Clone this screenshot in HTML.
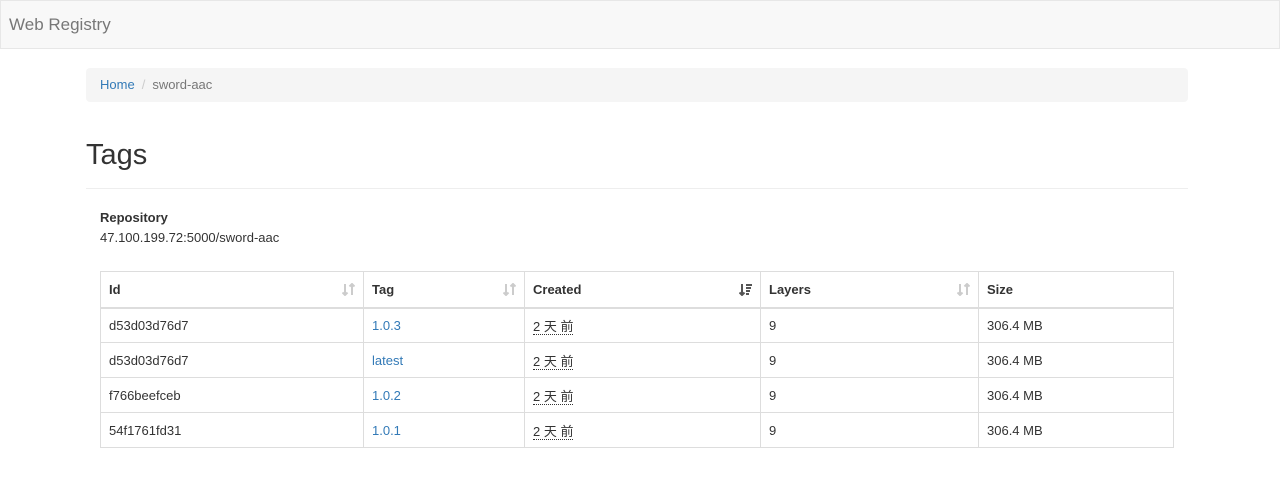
<!DOCTYPE html>
<html><head><meta charset="utf-8"><style>
*{box-sizing:border-box;margin:0;padding:0}
body{width:1280px;height:487px;background:#fff;font-family:"Liberation Sans","Noto Sans CJK SC",sans-serif;font-size:13px;color:#333;position:relative;overflow:hidden}
.nav{position:absolute;left:0;top:0;width:1280px;height:49px;background:#f8f8f8;border:1px solid #e7e7e7}
.brand{position:absolute;left:8px;top:14px;font-size:17px;color:#777}
.bc{position:absolute;left:86px;top:68px;width:1102px;height:34px;background:#f5f5f5;border-radius:4px;padding:8px 14px;line-height:18px}
.bc a{color:#337ab7;text-decoration:none}
.bc .s{color:#ccc;padding:0 7px}
.bc .c{color:#777}
h1{position:absolute;left:86px;top:138px;font-size:29px;font-weight:500;line-height:34px}
.hr{position:absolute;left:86px;top:188px;width:1102px;border-top:1px solid #eee}
.rep{position:absolute;left:100px;top:208px;line-height:20px}
table{position:absolute;left:100px;top:271px;width:1074px;border-collapse:collapse}
td,th{border:1px solid #ddd;padding:0 8px;text-align:left;height:35px;position:relative}
th{border-bottom:2px solid #ddd;height:36px}
td a{color:#337ab7;text-decoration:none}
.d{border-bottom:1px dotted #333}
.si{position:absolute;right:8px;top:11px}
</style></head><body>
<div class="nav"><div class="brand">Web Registry</div></div>
<div class="bc"><a>Home</a><span class="s">/</span><span class="c">sword-aac</span></div>
<h1>Tags</h1>
<div class="hr"></div>
<div class="rep"><b>Repository</b><br>47.100.199.72:5000/sword-aac</div>
<table>
<tr><th style="width:263px">Id<svg class="si" width="13" height="13" viewBox="0 0 13 13"><path d="M3 1v11M0.5 9.5L3 12L5.5 9.5M10 12V1M7.5 3.5L10 1L12.5 3.5" stroke="#ccc" stroke-width="2" fill="none"/></svg></th><th style="width:161px">Tag<svg class="si" width="13" height="13" viewBox="0 0 13 13"><path d="M3 1v11M0.5 9.5L3 12L5.5 9.5M10 12V1M7.5 3.5L10 1L12.5 3.5" stroke="#ccc" stroke-width="2" fill="none"/></svg></th><th style="width:236px">Created<svg class="si" width="13" height="13" viewBox="0 0 13 13"><path d="M3 1v11M0.5 9.5L3 12L5.5 9.5M7 2h6M7 5h5M7 8h4M7 11h3" stroke="#555" stroke-width="2" fill="none"/></svg></th><th style="width:218px">Layers<svg class="si" width="13" height="13" viewBox="0 0 13 13"><path d="M3 1v11M0.5 9.5L3 12L5.5 9.5M10 12V1M7.5 3.5L10 1L12.5 3.5" stroke="#ccc" stroke-width="2" fill="none"/></svg></th><th>Size</th></tr>
<tr><td>d53d03d76d7</td><td><a>1.0.3</a></td><td><span class="d">2 天 前</span></td><td>9</td><td>306.4 MB</td></tr>
<tr><td>d53d03d76d7</td><td><a>latest</a></td><td><span class="d">2 天 前</span></td><td>9</td><td>306.4 MB</td></tr>
<tr><td>f766beefceb</td><td><a>1.0.2</a></td><td><span class="d">2 天 前</span></td><td>9</td><td>306.4 MB</td></tr>
<tr><td>54f1761fd31</td><td><a>1.0.1</a></td><td><span class="d">2 天 前</span></td><td>9</td><td>306.4 MB</td></tr>
</table>
</body></html>
